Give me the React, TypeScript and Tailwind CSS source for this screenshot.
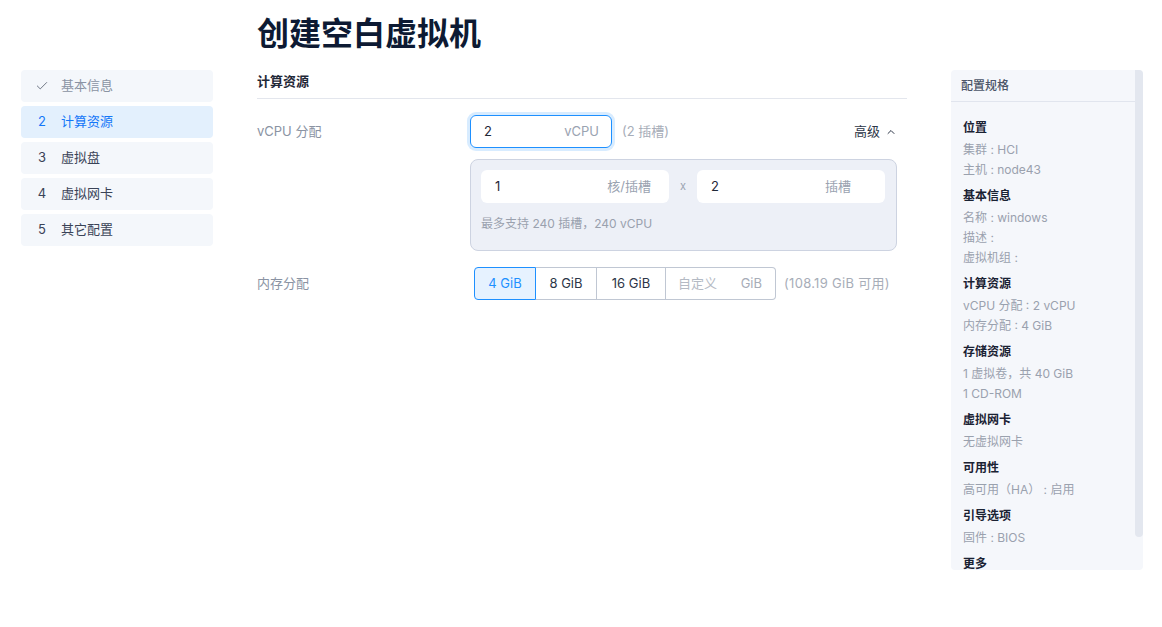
import React from 'react';
import { Check, ChevronUp } from 'lucide-react';

const steps = [
  { n: '1', label: '基本信息', state: 'done' },
  { n: '2', label: '计算资源', state: 'active' },
  { n: '3', label: '虚拟盘', state: 'todo' },
  { n: '4', label: '虚拟网卡', state: 'todo' },
  { n: '5', label: '其它配置', state: 'todo' },
];

const spec = [
  { title: '位置', items: ['集群 : HCI', '主机 : node43'] },
  { title: '基本信息', items: ['名称 : windows', '描述 :', '虚拟机组 :'] },
  { title: '计算资源', items: ['vCPU 分配 : 2 vCPU', '内存分配 : 4 GiB'] },
  { title: '存储资源', items: ['1 虚拟卷，共 40 GiB', '1 CD-ROM'] },
  { title: '虚拟网卡', items: ['无虚拟网卡'] },
  { title: '可用性', items: ['高可用（HA） : 启用'] },
  { title: '引导选项', items: ['固件 : BIOS'] },
  { title: '更多', items: [] as string[] },
];

export default function App() {
  return (
    <div
      className="min-h-screen bg-white flex px-[21px] text-[13px]"
      style={{ fontFamily: 'Inter, "Noto Sans CJK SC", sans-serif' }}
    >
      {/* 步骤导航 */}
      <div className="w-[192px] pt-[70px] flex flex-col gap-[4px] shrink-0">
        {steps.map(s => (
          <div
            key={s.n}
            className={
              s.state === 'active'
                ? 'h-[32px] rounded-[4px] bg-[#e3f0fd] flex items-center pl-[14px] text-[#1477f8]'
                : s.state === 'done'
                ? 'h-[32px] rounded-[4px] bg-[#f4f7fb] flex items-center pl-[14px] text-[#8a93a3]'
                : 'h-[32px] rounded-[4px] bg-[#f4f7fb] flex items-center pl-[14px] text-[#3a4357]'
            }
          >
            <span className="w-[14px] flex justify-center">
              {s.state === 'done' ? <Check className="w-[14px] h-[14px] text-[#5b6474]" strokeWidth={1.5} /> : s.n}
            </span>
            <span className="ml-[12px]">{s.label}</span>
          </div>
        ))}
      </div>

      {/* 主体 */}
      <div className="ml-[44px] w-[650px] shrink-0">
        <h1 className="pt-[14px] text-[32px] leading-[40px] font-bold text-[#0d1a33]">创建空白虚拟机</h1>

        <div className="mt-[16px] pb-[6px] border-b border-[#e3e6ed] leading-[22px] font-bold text-[#1f2837]">计算资源</div>

        {/* vCPU */}
        <div className="mt-[16px] flex items-center">
          <div className="w-[213px] text-[#8a93a3]">vCPU 分配</div>
          <div className="w-[142px] h-[33px] rounded-[6px] border border-[#1e90ff] ring-[3px] ring-[#d8ecff] flex items-center justify-between pl-[13px] pr-[12px]">
            <span className="text-[#1f2837]">2</span>
            <span className="text-[#9aa3b1]">vCPU</span>
          </div>
          <span className="ml-[10px] text-[#a7adb8]">(2 插槽)</span>
          <span className="ml-auto mr-[10px] flex items-center gap-[5px] text-[#2d3648]">
            高级 <ChevronUp className="w-[12px] h-[12px]" strokeWidth={2} />
          </span>
        </div>

        <div className="mt-[11px] ml-[213px] w-[427px] h-[92px] rounded-[8px] bg-[#edf0f7] border border-[#cdd3e1] p-[10px]">
          <div className="flex items-center">
            <div className="w-[188px] h-[33px] rounded-[6px] bg-white flex items-center justify-between pl-[14px] pr-[18px]">
              <span className="text-[#1f2837]">1</span>
              <span className="text-[#9aa3b1]">核/插槽</span>
            </div>
            <span className="w-[28px] text-center text-[11px] text-[#9aa3b1]">x</span>
            <div className="w-[188px] h-[33px] rounded-[6px] bg-white flex items-center justify-between pl-[14px] pr-[34px]">
              <span className="text-[#1f2837]">2</span>
              <span className="text-[#9aa3b1]">插槽</span>
            </div>
          </div>
          <div className="mt-[12px] text-[12px] leading-[18px] text-[#9aa1ae]">最多支持 240 插槽，240 vCPU</div>
        </div>

        {/* 内存 */}
        <div className="mt-[16px] flex items-center">
          <div className="w-[217px] text-[#8a93a3]">内存分配</div>
          <div className="flex h-[33px]">
            <div className="w-[62px] rounded-l-[4px] border border-[#1e90ff] bg-[#e6f2ff] text-[#1e90ff] flex items-center justify-center">4 GiB</div>
            <div className="w-[61px] border-y border-r border-[#c0c7d3] text-[#2d3648] flex items-center justify-center">8 GiB</div>
            <div className="w-[69px] border-y border-r border-[#c0c7d3] text-[#2d3648] flex items-center justify-center">16 GiB</div>
            <div className="w-[110px] rounded-r-[4px] border-y border-r border-[#c0c7d3] flex items-center justify-between pl-[12px] pr-[13px]">
              <span className="text-[#b4bac4]">自定义</span>
              <span className="text-[#a7adb8]">GiB</span>
            </div>
          </div>
          <span className="ml-[8px] text-[#a7adb8] tracking-[0.3px]">(108.19 GiB 可用)</span>
        </div>
      </div>

      {/* 配置规格 */}
      <div className="ml-[44px] mt-[70px] w-[192px] h-[500px] rounded-[4px] bg-[#f5f7fb] flex overflow-hidden shrink-0">
        <div className="flex-1 overflow-hidden">
          <div className="h-[32px] border-b border-[#e1e5ee] flex items-center pl-[10px] text-[12px] font-medium text-[#4b5568]">配置规格</div>
          <div className="pl-[12px] pt-[16px] flex flex-col gap-[6px] text-[12px]">
            {spec.map(sec => (
              <div key={sec.title}>
                <div className="leading-[20px] mb-[2px] font-bold text-[#1a2233]">{sec.title}</div>
                {sec.items.map(it => (
                  <div key={it} className="leading-[20px] text-[#9aa1ae]">{it}</div>
                ))}
              </div>
            ))}
          </div>
        </div>
        <div className="w-[8px]">
          <div className="h-[467px] bg-[#e3e7ef] rounded-b-[4px]"></div>
        </div>
      </div>
    </div>
  );
}
